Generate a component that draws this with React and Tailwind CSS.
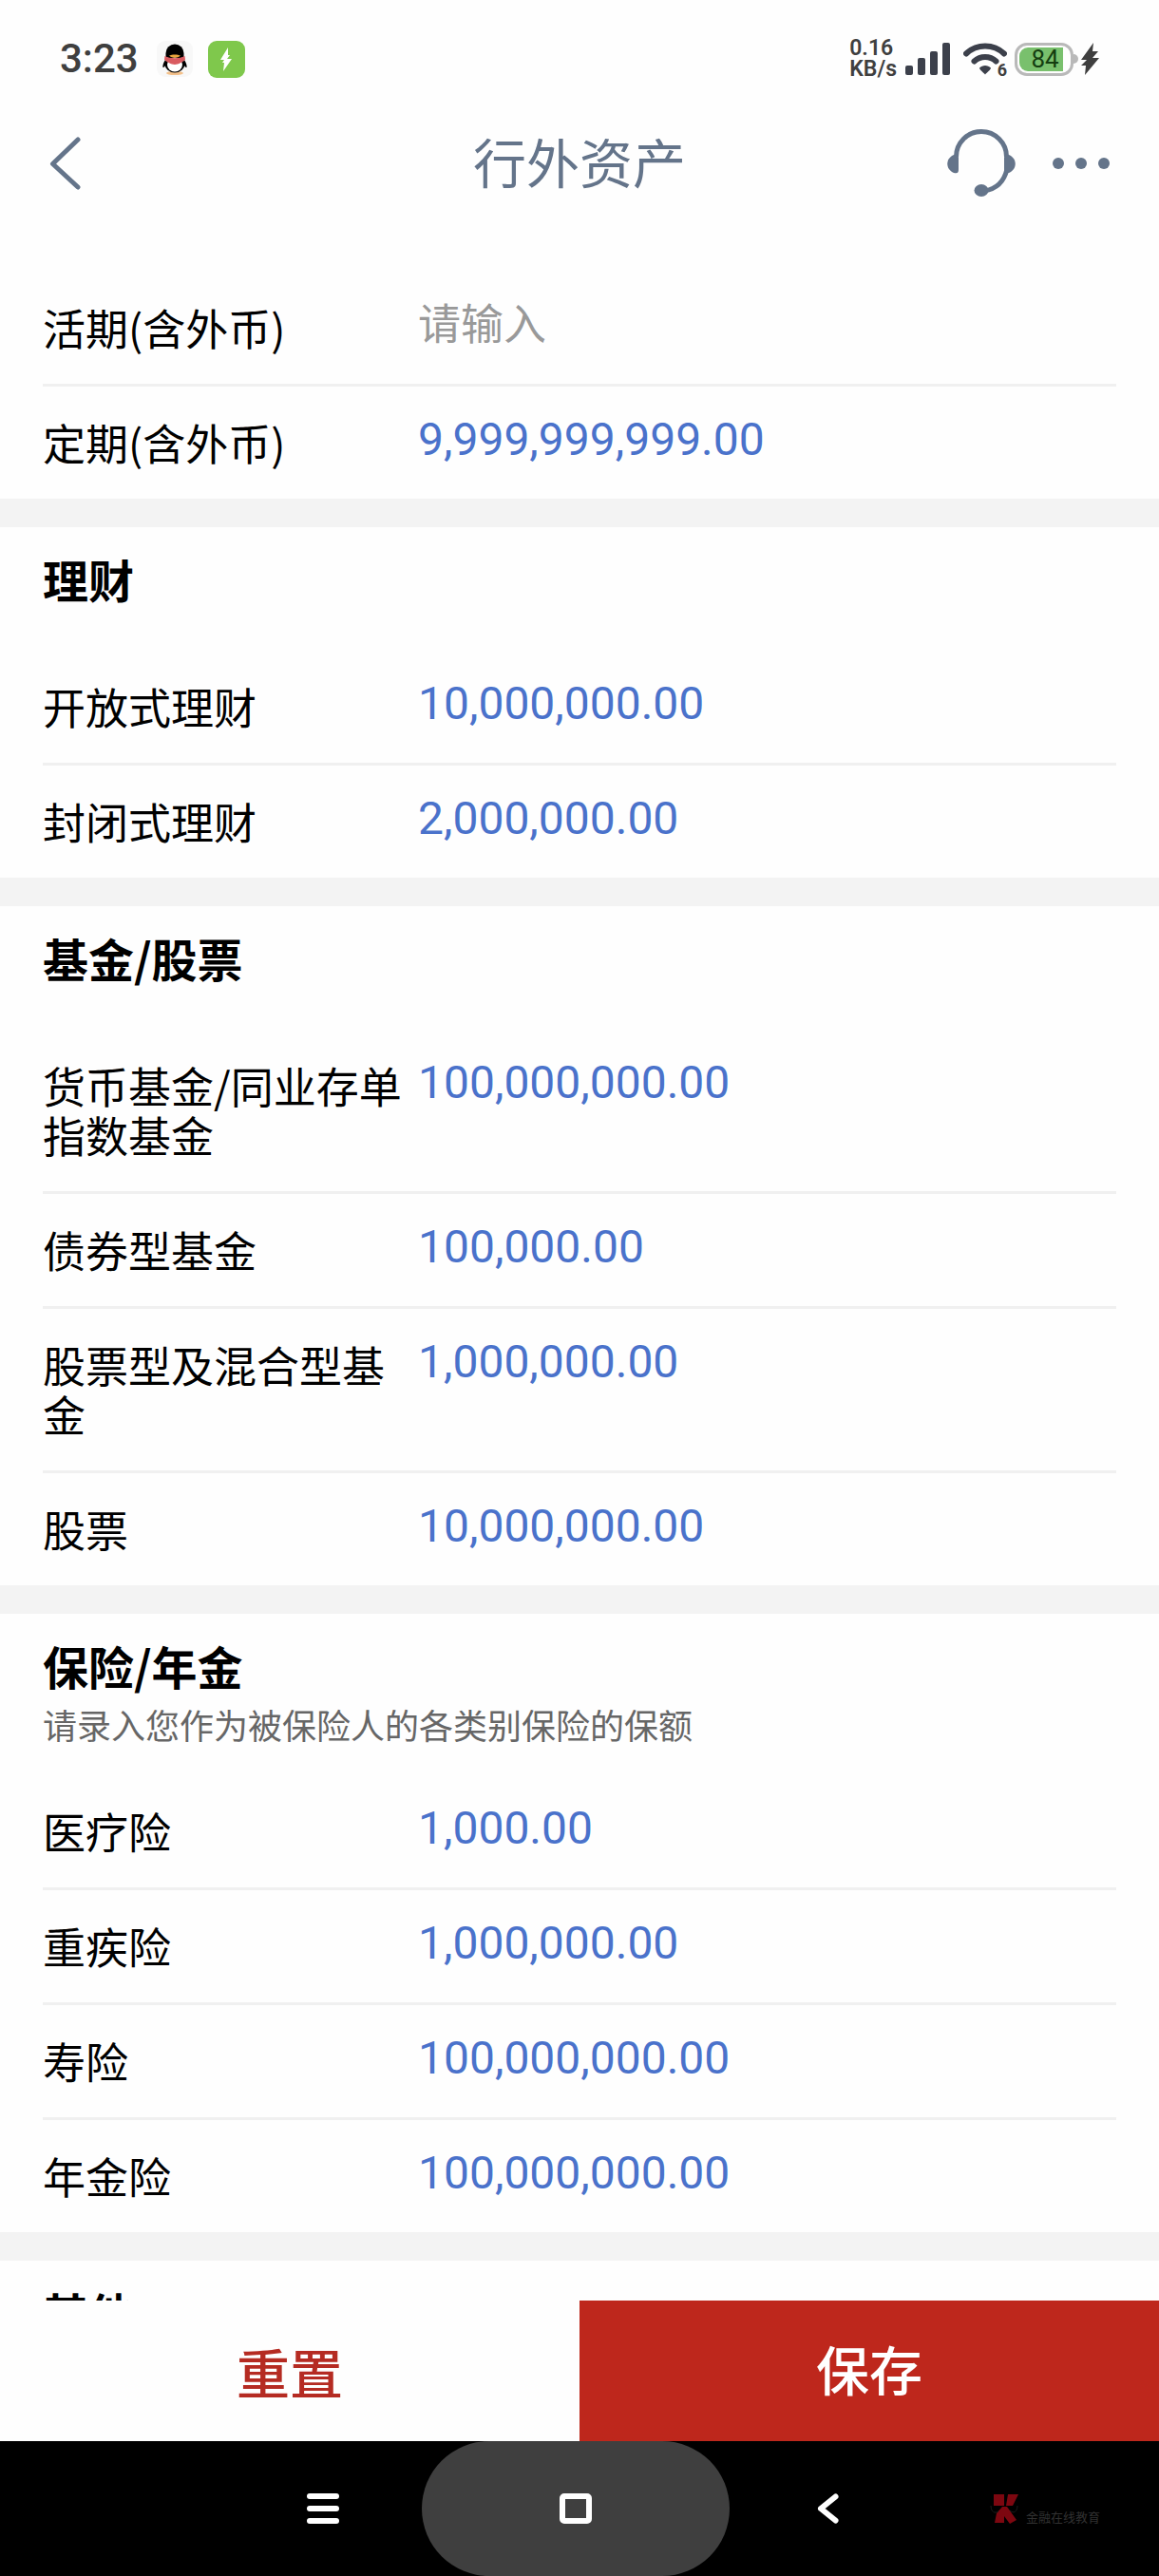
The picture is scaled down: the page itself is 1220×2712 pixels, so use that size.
import React from "react";

const cjk = "font-['Noto_Sans_CJK_SC',sans-serif]";
const latin = "font-[Roboto,'Noto_Sans_CJK_SC',sans-serif]";

const sections = [
  {
    id: "deposit",
    rows: [
      { label: "活期(含外币)", value: "" },
      { label: "定期(含外币)", value: "9,999,999,999.00" },
    ],
  },
  {
    id: "wealth",
    title: "理财",
    rows: [
      { label: "开放式理财", value: "10,000,000.00" },
      { label: "封闭式理财", value: "2,000,000.00" },
    ],
  },
  {
    id: "fund",
    title: "基金/股票",
    rows: [
      { label: "货币基金/同业存单指数基金", value: "100,000,000.00" },
      { label: "债券型基金", value: "100,000.00" },
      { label: "股票型及混合型基金", value: "1,000,000.00" },
      { label: "股票", value: "10,000,000.00" },
    ],
  },
  {
    id: "insurance",
    title: "保险/年金",
    note: "请录入您作为被保险人的各类别保险的保额",
    rows: [
      { label: "医疗险", value: "1,000.00" },
      { label: "重疾险", value: "1,000,000.00" },
      { label: "寿险", value: "100,000,000.00" },
      { label: "年金险", value: "100,000,000.00" },
    ],
  },
  { id: "other", title: "其他", rows: [] },
];

function PenguinIcon() {
  return (
    <svg width="38" height="38" viewBox="0 0 38 38" aria-hidden="true">
      <rect width="38" height="38" rx="9" fill="#f8f8f8" />
      <ellipse cx="19" cy="34" rx="9" ry="2" fill="#f3c08a" />
      <path d="M9 20c-2 3-3 6-2.500 8 1 .5 2-1 3-3zM29 20c2 3 3 6 2.500 8-1 .5-2-1-3-3z" fill="#000" />
      <ellipse cx="19" cy="24" rx="10.500" ry="9.500" fill="#000" />
      <ellipse cx="19" cy="25" rx="8" ry="7.500" fill="#fff" />
      <path d="M9.500 17V13a9.500 9.500 0 0 1 19 0v4z" fill="#000" />
      <path d="M8.500 16c6 3 15 3 21 0l.5 4c-3 2-7 5-11 5s-8-3-11-5z" fill="#d95b60" />
      <path d="M13 15.500c3-1.500 9-1.500 12 0-3 3-9 3-12 0z" fill="#eaa63c" />
    </svg>
  );
}

function ChargeAppIcon() {
  return (
    <svg width="39" height="39" viewBox="0 0 39 39" aria-hidden="true">
      <rect width="39" height="39" rx="9" fill="#7fc84c" />
      <path d="M21 7 13 20h4l-2 3h2l-1 9 9-13h-5l3-4h-2z" fill="#fff" />
    </svg>
  );
}

function SignalIcon() {
  return (
    <svg width="47" height="34" viewBox="0 0 47 34" fill="#3c404b" aria-hidden="true">
      <rect x="0" y="24" width="8" height="10" rx="2" />
      <rect x="13" y="16" width="8" height="18" rx="2" />
      <rect x="26" y="9" width="8" height="25" rx="2" />
      <rect x="39" y="0" width="8" height="34" rx="2" />
    </svg>
  );
}

function WifiIcon() {
  return (
    <svg width="46" height="34" viewBox="0 0 46 34" fill="none" aria-hidden="true">
      <path d="M3 11.500C14 .8 32 .8 43 11.500" stroke="#3c404b" strokeWidth="6" strokeLinecap="round" />
      <path d="M11.500 19.500c6.500-6 16.500-6 23 0" stroke="#3c404b" strokeWidth="6" strokeLinecap="round" />
      <path d="M17 26.500c3-3.500 9-3.500 12 0 0 2-4 4.500-6 7-2-2.500-6-5-6-7z" fill="#3c404b" />
    </svg>
  );
}

function BoltIcon() {
  return (
    <svg width="20" height="34" viewBox="0 0 20 34" aria-hidden="true">
      <path d="M14 0 1 18h6l-6 6h5l-1 10L20 16h-7l6-7h-6z" fill="#3f3f3f" />
    </svg>
  );
}

function StatusBar() {
  return (
    <div className={`flex h-[124px] shrink-0 items-center justify-between px-[63px] text-[#3f3f3f] ${latin}`}>
      <div className="flex items-center">
        <span className="text-[42px] leading-[48px] font-medium">3:23</span>
        <span className="ml-[19px] flex items-center gap-4">
          <PenguinIcon />
          <ChargeAppIcon />
        </span>
      </div>
      <div className="flex items-center">
        <div className="mr-[9px] flex flex-col text-[23px] leading-[22px] font-semibold">
          <span>0.16</span>
          <span>KB/s</span>
        </div>
        <SignalIcon />
        <div className="relative mr-2 ml-[14px]">
          <WifiIcon />
          <span className="absolute right-0 -bottom-1 text-[18px] leading-[18px] font-bold">6</span>
        </div>
        <div className="flex h-[35px] w-[62px] items-center rounded-[13px] border-[3px] border-[#b9b9b9] p-[2px]">
          <span className="flex h-full w-[46px] items-center justify-center rounded-l-[9px] bg-[#79c06d] pl-2 text-[26px] leading-[26px] text-[#143d10]">
            84
          </span>
        </div>
        <span className="mr-[2px] h-[10px] w-[5px] rounded-r-full bg-[#b9b9b9]" />
        <BoltIcon />
      </div>
    </div>
  );
}

function TitleBar() {
  return (
    <header className="grid h-24 shrink-0 grid-cols-[1fr_auto_1fr] items-center px-[52px] text-[#64748a]">
      <button type="button" aria-label="返回" className="justify-self-start">
        <svg width="33" height="56" viewBox="0 0 33 56" fill="none" stroke="#64748a" strokeWidth="5" strokeLinecap="round" strokeLinejoin="round">
          <path d="M30 3 3.500 28.500 30 53" />
        </svg>
      </button>
      <h1 className={`pb-[6px] text-[56px] leading-[72px] ${cjk}`}>行外资产</h1>
      <div className="flex items-center gap-[38px] justify-self-end">
        <button type="button" aria-label="客服">
          <svg width="74" height="72" viewBox="0 0 74 72" fill="none">
            <path d="M10.500 29a26.500 26.500 0 0 1 53 0" stroke="#64748a" strokeWidth="5" />
            <path d="M64 42c-3 13-11 21-24 23" stroke="#64748a" strokeWidth="5" />
            <path d="M8 27c3-1 5 0 5 3v12c0 4-1 5-5 4-9-4-9-15 0-19z" fill="#64748a" />
            <path d="M66 27c-3-1-5 0-5 3v12c0 4 1 5 5 4 9-4 9-15 0-19z" fill="#64748a" />
            <ellipse cx="37" cy="64.500" rx="7.500" ry="6.500" fill="#64748a" />
          </svg>
        </button>
        <button type="button" aria-label="更多" className="flex gap-3">
          <span className="size-3 rounded-full bg-[#64748a]" />
          <span className="size-3 rounded-full bg-[#64748a]" />
          <span className="size-3 rounded-full bg-[#64748a]" />
        </button>
      </div>
    </header>
  );
}

function Row({ id, label, value }) {
  return (
    <div className="flex items-start border-b-[3px] border-[#f0f0f0] last:border-b-0">
      <label htmlFor={id} className={`w-[395px] shrink-0 py-[33px] pr-[15px] text-[45px] leading-[52px] text-black ${cjk}`}>
        {label}
      </label>
      <input
        id={id}
        type="text"
        inputMode="decimal"
        defaultValue={value}
        placeholder="请输入"
        className={`h-[110px] min-w-0 flex-1 bg-transparent text-[48px] text-[#4a72cb] outline-none placeholder:text-[45px] placeholder:text-[#999999] ${latin}`}
      />
    </div>
  );
}

function Section({ id, title, note, rows }) {
  return (
    <section className="border-b-[30px] border-[#f3f3f3] px-[45px] last:border-b-0">
      {title && (
        <div className={note ? "pt-[22px] pb-6" : "pt-[22px] pb-11"}>
          <h2 className={`text-[48px] leading-[64px] font-bold text-black ${cjk}`}>{title}</h2>
          {note && <p className={`text-[36px] leading-[60px] text-[#666666] ${cjk}`}>{note}</p>}
        </div>
      )}
      <div>
        {rows.map((row, i) => (
          <Row key={row.label} id={`${id}-${i}`} {...row} />
        ))}
      </div>
    </section>
  );
}

function SystemNav() {
  return (
    <nav className="grid h-[142px] shrink-0 grid-cols-[1fr_324px_1fr] bg-black pr-2">
      <div className="flex items-center justify-end pr-[87px]">
        <button type="button" aria-label="最近任务" className="flex w-[34px] flex-col gap-[7px]">
          <span className="h-[6px] rounded-full bg-white" />
          <span className="h-[6px] rounded-full bg-white" />
          <span className="h-[6px] rounded-full bg-white" />
        </button>
      </div>
      <button type="button" aria-label="主页" className="flex items-center justify-center rounded-full bg-[#3f3f3f]">
        <span className="h-8 w-[34px] rounded-[5px] border-[6px] border-white" />
      </button>
      <div className="flex items-center justify-between pr-[54px] pl-[92px]">
        <button type="button" aria-label="后退">
          <svg width="23" height="32" viewBox="0 0 23 32" fill="none" stroke="#fff" strokeWidth="6" strokeLinecap="round" strokeLinejoin="round">
            <path d="M19.500 3.500 4 16l15.500 12.500" />
          </svg>
        </button>
        <div className="flex items-end gap-2">
          <svg width="30" height="32" viewBox="0 0 30 32" aria-hidden="true">
            <path d="M4 1h11v12H4zM19 1h11l-6 12h-7zM7 21l6-7h5l10 14-7 4-6-8v7H5z" fill="#7d0710" />
            <path d="M1 13c0 6 4 9 8 6M29 13c0 6-4 9-8 5" stroke="#1c1c1c" fill="none" />
          </svg>
          <span className={`text-[13px] leading-[15px] text-[#303030] ${cjk}`}>金融在线教育</span>
        </div>
      </div>
    </nav>
  );
}

export default function App() {
  return (
    <div className="flex h-screen flex-col overflow-hidden bg-[#fefefe]">
      <StatusBar />
      <TitleBar />
      <main className="min-h-0 flex-1 overflow-hidden pt-[66px]">
        {sections.map((section) => (
          <Section key={section.id} {...section} />
        ))}
      </main>
      <div className={`grid h-[148px] shrink-0 grid-cols-2 text-[56px] leading-[72px] font-medium ${cjk}`}>
        <button type="button" className="bg-[#fefefe] text-[#b52b22]">
          重置
        </button>
        <button type="button" className="bg-[#be271c] pb-[6px] text-white">
          保存
        </button>
      </div>
      <SystemNav />
    </div>
  );
}
